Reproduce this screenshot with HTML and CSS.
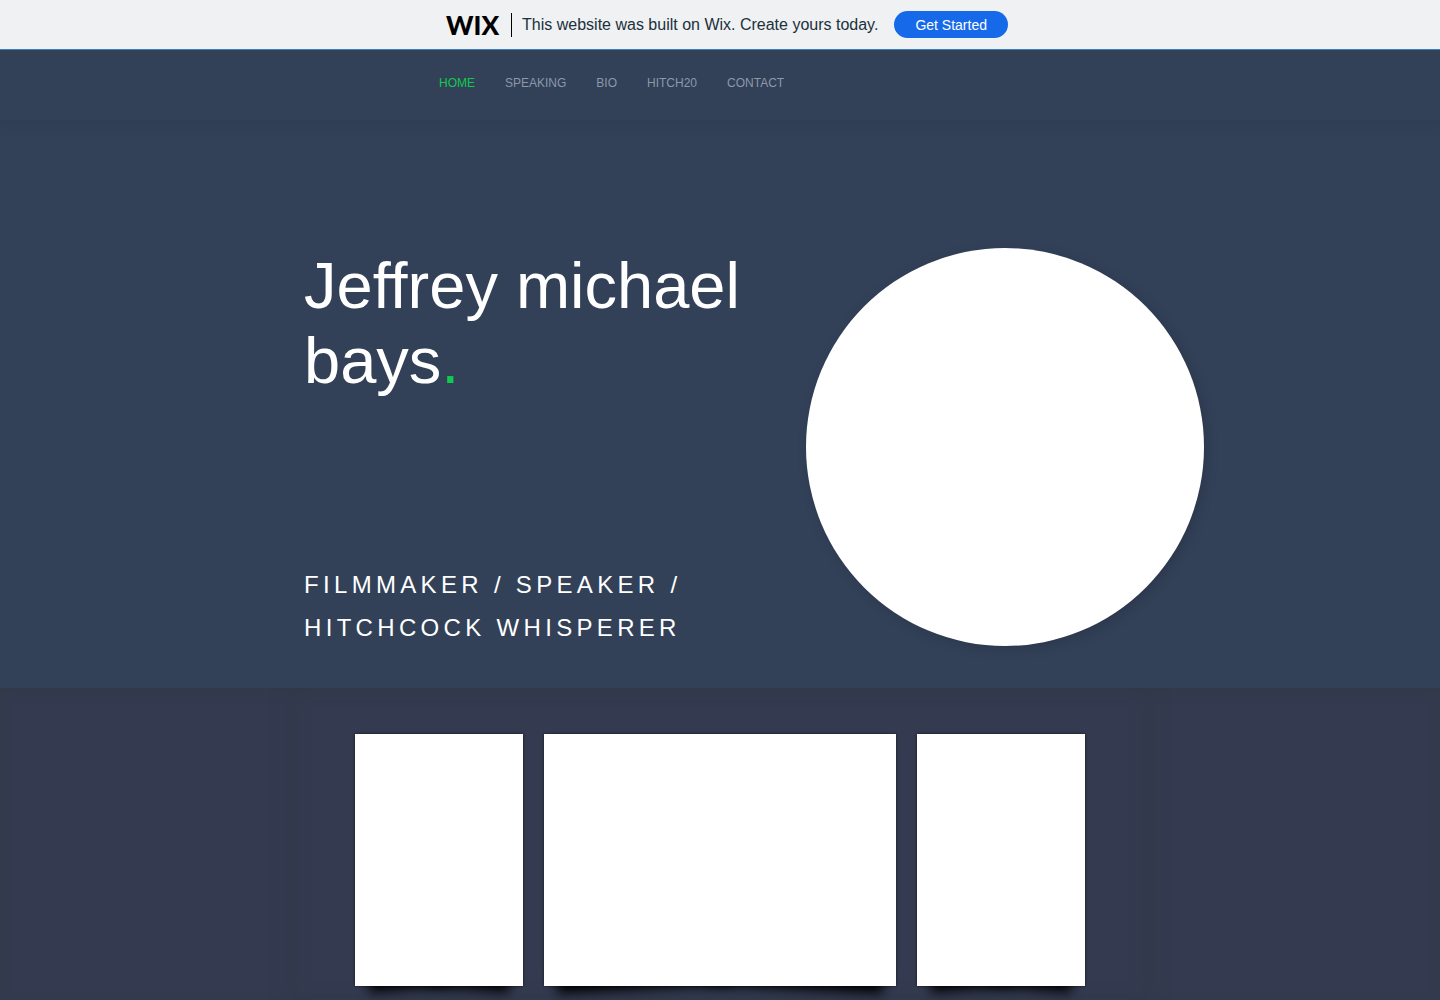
FILE: index.html
```html
<!DOCTYPE html>
<html lang="en">

<head>
    <meta charset="UTF-8">
    <meta name="viewport" content="width=device-width, initial-scale=1.0">
    <title>Jeffrey Michael Bays</title>
    <link rel="stylesheet" href="styles.css">
</head>

<body>
    <div class="banner">
        <span class="banner-logo">WIX</span>
        <span class="banner-text">This website was built on Wix. Create yours today.</span>
        <a class="banner-button" href="#">Get Started</a>
    </div>

    <header class="header">
        <nav class="nav container">
            <a class="active" href="#">HOME</a>
            <a href="#">SPEAKING</a>
            <a href="#">BIO</a>
            <a href="#">HITCH20</a>
            <a href="#">CONTACT</a>
        </nav>
    </header>

    <main class="main">
        <section class="hero container">
            <div class="intro">
                <h1>Jeffrey michael bays<span class="dot">.</span></h1>
                <p class="tagline">FILMMAKER / SPEAKER / HITCHCOCK WHISPERER</p>
            </div>
            <div class="portrait"></div>
        </section>

        <section class="gallery">
            <div class="gallery-panel">
                <div class="card"></div>
                <div class="card card-wide"></div>
                <div class="card"></div>
            </div>
        </section>
    </main>
</body>

</html>
```
FILE: styles.css
```css
* {
    box-sizing: border-box;
}

body {
    display: flex;
    flex-direction: column;
    min-height: 100vh;
    margin: 0;
    background-color: #324158;
    color: #fff;
    font-family: "Liberation Sans", Arial, sans-serif;
}

a {
    text-decoration: none;
}

.container {
    width: 100%;
    max-width: 980px;
    margin: 0 auto;
}

/* Top banner */
.banner {
    position: relative;
    display: flex;
    align-items: center;
    justify-content: center;
    height: 50px;
    padding-left: 14px;
    background-color: #eff1f2;
    border-bottom: 1px solid #3f7cc4;
    color: #20303c;
}

.banner-logo {
    padding-right: 12px;
    border-right: 1px solid #000;
    color: #000;
    font-family: Lato, sans-serif;
    font-size: 26px;
    font-weight: 900;
    line-height: 24px;
}

.banner-text {
    margin: 0 16px 0 10px;
    font-size: 16px;
}

.banner-button {
    padding: 1px 21px 0;
    border-radius: 14px;
    background-color: #166aea;
    color: #fff;
    font-size: 14px;
    line-height: 26px;
}

/* Navigation */
.header {
    height: 70px;
    box-shadow: 0 5px 12px rgba(30, 40, 70, 0.15);
}

.nav {
    display: flex;
    gap: 30px;
    padding: 24px 0 0 209px;
    font-size: 12px;
    line-height: 18px;
}

.nav a {
    color: #8d98ab;
}

.nav .active {
    color: #11c94f;
}

/* Hero */
.main {
    display: flex;
    flex: 1;
    flex-direction: column;
}

.hero {
    display: flex;
    justify-content: space-between;
    padding: 128px 6px 39px 74px;
}

.intro {
    width: 460px;
}

h1 {
    margin: 0 0 165px;
    font-size: 65px;
    font-weight: 400;
    line-height: 75px;
}

.dot {
    color: #11c94f;
}

.tagline {
    max-width: 400px;
    margin: 0;
    font-size: 24px;
    letter-spacing: 0.18em;
    line-height: 43px;
}

.portrait {
    width: 398px;
    height: 398px;
    border-radius: 50%;
    background-color: #fff;
    box-shadow: 3px 3px 10px rgba(40, 45, 65, 0.5);
}

/* Gallery */
.gallery {
    flex: 1;
    display: flex;
    justify-content: center;
    overflow: hidden;
    background-color: #343b50;
    box-shadow: inset 0 4px 10px #323a48;
}

.gallery-panel {
    position: relative;
    z-index: 0;
    display: flex;
    justify-content: center;
    gap: 21px;
    width: 100%;
    max-width: 856px;
    padding: 46px 0 14px;
    box-shadow: 0 0 16px #30394a, inset 0 0 16px #30394a;
}

.card {
    position: relative;
    width: 168px;
    height: 252px;
    background-color: #fff;
    box-shadow: 0 0 3px rgba(0, 0, 0, 0.6);
}

.card-wide {
    width: 352px;
}

/* Lifted corners under each card */
.card::before,
.card::after {
    content: "";
    position: absolute;
    z-index: -1;
    bottom: 13px;
    left: 12px;
    width: 50%;
    height: 20px;
    box-shadow: 0 16px 12px #000;
    transform: rotate(-5deg);
}

.card::after {
    right: 12px;
    left: auto;
    transform: rotate(5deg);
}

.card-wide::before {
    transform: rotate(-3deg);
}

.card-wide::after {
    transform: rotate(3deg);
}
```
